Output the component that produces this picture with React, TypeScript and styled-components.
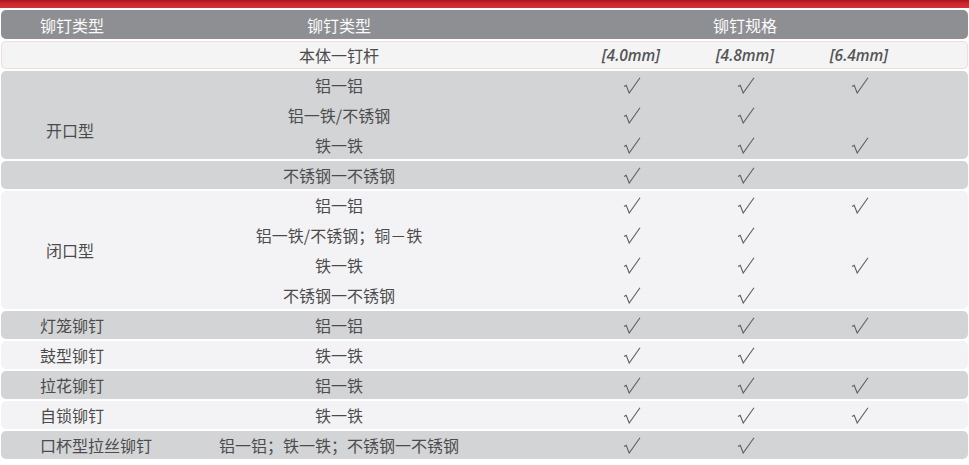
import * as React from 'react';
import styled, { createGlobalStyle } from 'styled-components';

type Tone = 'gray' | 'light';

interface SpecRow {
  material: string;
  specs: [boolean, boolean, boolean];
}

interface RivetGroup {
  label: string;
  tone: Tone;
  indent?: boolean;
  blocks: SpecRow[][];
}

const COLS = '210px 256px 107px 114px 114px 114px 1fr';

const TONES: Record<Tone, string> = {
  gray: '#d3d4d6',
  light: '#f3f3f5',
};

const groups: RivetGroup[] = [
  {
    label: '开口型',
    tone: 'gray',
    indent: true,
    blocks: [
      [
        { material: '铝一铝', specs: [true, true, true] },
        { material: '铝一铁/不锈钢', specs: [true, true, false] },
        { material: '铁一铁', specs: [true, true, true] },
      ],
      [{ material: '不锈钢一不锈钢', specs: [true, true, false] }],
    ],
  },
  {
    label: '闭口型',
    tone: 'light',
    indent: true,
    blocks: [
      [
        { material: '铝一铝', specs: [true, true, true] },
        { material: '铝一铁/不锈钢；铜－铁', specs: [true, true, false] },
        { material: '铁一铁', specs: [true, true, true] },
        { material: '不锈钢一不锈钢', specs: [true, true, false] },
      ],
    ],
  },
  { label: '灯笼铆钉', tone: 'gray', blocks: [[{ material: '铝一铝', specs: [true, true, true] }]] },
  { label: '鼓型铆钉', tone: 'light', blocks: [[{ material: '铁一铁', specs: [true, true, false] }]] },
  { label: '拉花铆钉', tone: 'gray', blocks: [[{ material: '铝一铁', specs: [true, true, true] }]] },
  { label: '自锁铆钉', tone: 'light', blocks: [[{ material: '铁一铁', specs: [true, true, true] }]] },
  {
    label: '口杯型拉丝铆钉',
    tone: 'gray',
    blocks: [[{ material: '铝一铝；铁一铁；不锈钢一不锈钢', specs: [true, true, false] }]],
  },
];

const sizes = ['[4.0mm]', '[4.8mm]', '[6.4mm]'];

const GlobalStyle = createGlobalStyle`
  body {
    margin: 0;
    background: #fff;
    font-family: "Noto Sans CJK SC", "Noto Sans", sans-serif;
  }
`;

const Page = styled.div`
  width: 969px;
`;

const RedBar = styled.div`
  height: 8px;
  background: linear-gradient(#a8161c, #c9262c 40%, #d23237);
`;

const Table = styled.div`
  display: flex;
  flex-direction: column;
  padding: 0 1px;
`;

const HeaderRow = styled.div`
  display: grid;
  grid-template-columns: ${COLS};
  align-items: center;
  height: 29px;
  margin: 2px 0 1px;
  background: #8e8f93;
  border-radius: 5px;
  color: #fbfbfb;
  font-size: 16px;
`;

const HeadCell = styled.div<{ $col: string; $left?: boolean }>`
  grid-column: ${(p) => p.$col};
  text-align: ${(p) => (p.$left ? 'left' : 'center')};
  padding-left: ${(p) => (p.$left ? '39px' : '0')};
`;

const SizeRow = styled.div`
  display: grid;
  grid-template-columns: ${COLS};
  align-items: center;
  height: 28px;
  margin: 1px 0;
  background: #f4f4f5;
  border-radius: 5px;
  box-shadow: inset 0 0 0 1px #eedede;
  color: #4b4b4b;
  font-size: 16px;
`;

const SizeLabel = styled.div<{ $col: number }>`
  grid-column: ${(p) => p.$col};
  text-align: center;
  font-family: "Open Sans", "Liberation Sans", sans-serif;
  font-style: italic;
  font-weight: 600;
  font-size: 15.5px;
  color: #555;
`;

const Group = styled.div<{ $rows: number }>`
  display: grid;
  grid-template-columns: ${COLS};
  grid-template-rows: repeat(${(p) => p.$rows}, 30px);
`;

const Band = styled.div<{ $tone: Tone; $start: number; $span: number }>`
  grid-column: 1 / -1;
  grid-row: ${(p) => `${p.$start} / span ${p.$span}`};
  margin: 1px 0;
  background: ${(p) => TONES[p.$tone]};
  border-radius: 5px;
`;

const LabelCell = styled.div<{ $indent?: boolean }>`
  grid-column: 1;
  grid-row: 1 / -1;
  display: flex;
  align-items: center;
  padding-left: ${(p) => (p.$indent ? '45px' : '39px')};
  color: #4b4b4b;
  font-size: 16px;
  z-index: 1;
`;

const Cell = styled.div<{ $col: number; $row: number }>`
  grid-column: ${(p) => p.$col};
  grid-row: ${(p) => p.$row};
  display: flex;
  align-items: center;
  justify-content: center;
  color: #4b4b4b;
  font-size: 16px;
  white-space: nowrap;
  z-index: 1;
`;

const CheckSvg = styled.svg`
  width: 18px;
  height: 17px;
  margin-left: 2px;
`;

const Check = () => (
  <CheckSvg viewBox="0 0 18 17" aria-label="√">
    <path d="M1 9.5 L3.2 8.3 L6.2 16 L17 0.8" fill="none" stroke="#5f5f5f" strokeWidth="1.1" strokeLinejoin="miter" />
  </CheckSvg>
);

const App = () => (
  <Page>
    <GlobalStyle />
    <RedBar />
    <Table>
      <HeaderRow>
        <HeadCell $col="1" $left>
          铆钉类型
        </HeadCell>
        <HeadCell $col="2">铆钉类型</HeadCell>
        <HeadCell $col="4 / span 3">铆钉规格</HeadCell>
      </HeaderRow>
      <SizeRow>
        <HeadCell $col="2">本体一钉杆</HeadCell>
        {sizes.map((s, i) => (
          <SizeLabel key={s} $col={i + 4}>
            {s}
          </SizeLabel>
        ))}
      </SizeRow>
      {groups.map((g) => {
        const rows = g.blocks.flat();
        let start = 1;
        return (
          <Group key={g.label} $rows={rows.length}>
            {g.blocks.map((b, bi) => {
              const band = <Band key={bi} $tone={g.tone} $start={start} $span={b.length} />;
              start += b.length;
              return band;
            })}
            <LabelCell $indent={g.indent}>{g.label}</LabelCell>
            {rows.map((r, ri) => (
              <React.Fragment key={ri}>
                <Cell $col={2} $row={ri + 1}>
                  {r.material}
                </Cell>
                {r.specs.map((on, si) =>
                  on ? (
                    <Cell key={si} $col={si + 4} $row={ri + 1}>
                      <Check />
                    </Cell>
                  ) : null
                )}
              </React.Fragment>
            ))}
          </Group>
        );
      })}
    </Table>
  </Page>
);

export default App;
